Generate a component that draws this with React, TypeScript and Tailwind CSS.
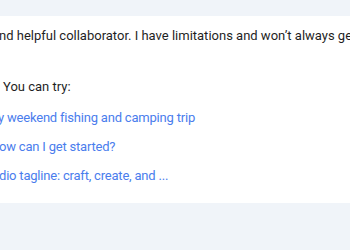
import React from 'react';

const links = [
  { text: 'y weekend fishing and camping trip', shift: 'ml-[-2px]' },
  { text: 'ow can I get started?', shift: 'ml-[-1px]' },
  { text: 'dio tagline: craft, create, and ...', shift: 'ml-[-1px]' },
];

const App: React.FC = () => {
  return (
    <div className="w-[350px] h-[250px] overflow-hidden bg-[#f0f4f9] font-['Roboto',sans-serif]">
      {/* Top strip */}
      <div className="h-4" />

      {/* Welcome card */}
      <div className="h-[187px] bg-white overflow-hidden whitespace-nowrap text-[13px] text-[#1f1f1f]">
        <div className="pt-[10px] leading-[20px] ml-[-1px]">
          nd helpful collaborator. I have limitations and won’t always get it right.
        </div>

        <div className="mt-[31px] leading-[20px] pl-[3px]">You can try:</div>

        <div className="mt-[11px] flex flex-col gap-[9px]">
          {links.map(l => (
            <div key={l.text} className={`leading-[20px] tracking-[-0.2px] text-[#4a7ded] ${l.shift}`}>
              {l.text}
            </div>
          ))}
        </div>
      </div>
    </div>
  );
};

export default App;
